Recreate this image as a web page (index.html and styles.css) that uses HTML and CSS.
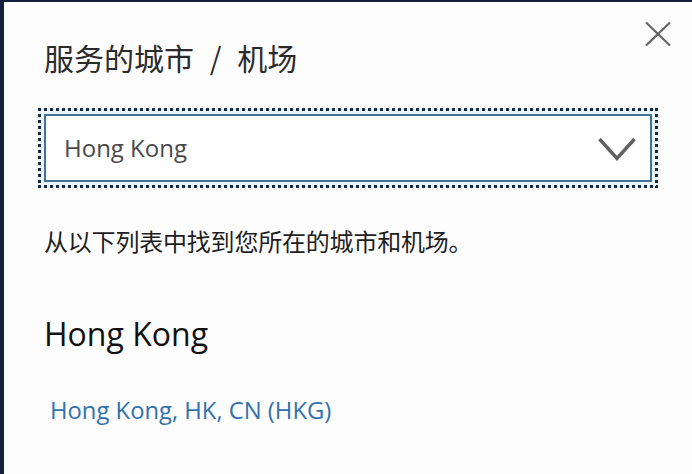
FILE: index.html
```html
<!DOCTYPE html>
<html lang="zh-CN">
<head>
<meta charset="utf-8">
<title>服务的城市 / 机场</title>
<link rel="stylesheet" href="styles.css">
</head>
<body>
<div class="frame">
  <div class="panel">
    <button class="close" aria-label="关闭">
      <svg width="26" height="24" viewBox="0 0 26 24"><path d="M1 0.5 L25 23.5 M25 0.5 L1 23.5" stroke="#666" stroke-width="2.2" fill="none"/></svg>
    </button>
    <h1 class="title">服务的城市 / 机场</h1>
    <div class="focus-ring">
      <div class="select">
        <span class="select-value">Hong Kong</span>
        <svg class="chevron" width="38" height="24" viewBox="0 0 38 24"><path d="M1.5 2 L19 21.5 L36.5 2" stroke="#606060" stroke-width="3.4" fill="none"/></svg>
      </div>
    </div>
    <p class="hint">从以下列表中找到您所在的城市和机场。</p>
    <h2 class="city">Hong Kong</h2>
    <a class="airport" href="#">Hong Kong, HK, CN (HKG)</a>
  </div>
</div>
</body>
</html>
```

FILE: styles.css
```css
html, body {
  margin: 0;
  padding: 0;
  background: #fdfdfd;
}
.frame {
  width: 692px;
  height: 474px;
  box-sizing: border-box;
  border-top: 2px solid #15213a;
  border-left: 4px solid #15213a;
  background: #fdfdfd;
  overflow: hidden;
}
.panel {
  position: relative;
  padding: 0 0 0 40px;
  font-family: "Open Sans", "Noto Sans CJK SC", sans-serif;
}
.close {
  position: absolute;
  top: 20px;
  right: 21px;
  border: 0;
  background: transparent;
  padding: 0;
  width: 26px;
  height: 24px;
  display: block;
}
.close svg { display: block; }
.title {
  margin: 0;
  padding-top: 34px;
  font-family: "Noto Sans CJK SC", sans-serif;
  font-weight: 400;
  font-size: 30px;
  line-height: 42px;
  color: #2b2b2b;
  word-spacing: 9px;
}
.focus-ring {
  width: 620px;
  box-sizing: border-box;
  margin: 30px 0 0 -6px;
  padding: 6px;
  background:
    repeating-linear-gradient(to right, #16283a 0 3px, transparent 3px 6px) left top / 100% 3px no-repeat,
    repeating-linear-gradient(to right, #16283a 0 3px, transparent 3px 6px) left bottom / 100% 3px no-repeat,
    repeating-linear-gradient(to bottom, #16283a 0 3px, transparent 3px 6px) left top / 3px 100% no-repeat,
    repeating-linear-gradient(to bottom, #16283a 0 3px, transparent 3px 6px) right top / 3px 100% no-repeat,
    #eaf6fb;
}
.select {
  height: 68px;
  box-sizing: border-box;
  border: 2px solid #41729a;
  background: #fefefe;
  display: flex;
  align-items: center;
  justify-content: space-between;
  padding: 0 14px 0 18px;
}
.select-value {
  font-size: 24px;
  color: #4a4a4a;
  line-height: 30px;
}
.chevron { display: block; margin-top: 2px; }
.hint {
  margin: 37px 0 0;
  font-family: "Noto Sans CJK SC", sans-serif;
  font-size: 24px;
  line-height: 32px;
  color: #1e1e1e;
  letter-spacing: -0.2px;
}
.city {
  margin: 55px 0 0;
  font-weight: 400;
  font-size: 32px;
  line-height: 44px;
  color: #111;
}
.airport {
  display: inline-block;
  margin: 38px 0 0 6px;
  font-size: 23.8px;
  line-height: 32px;
  color: #3172ad;
  text-decoration: none;
}
```
